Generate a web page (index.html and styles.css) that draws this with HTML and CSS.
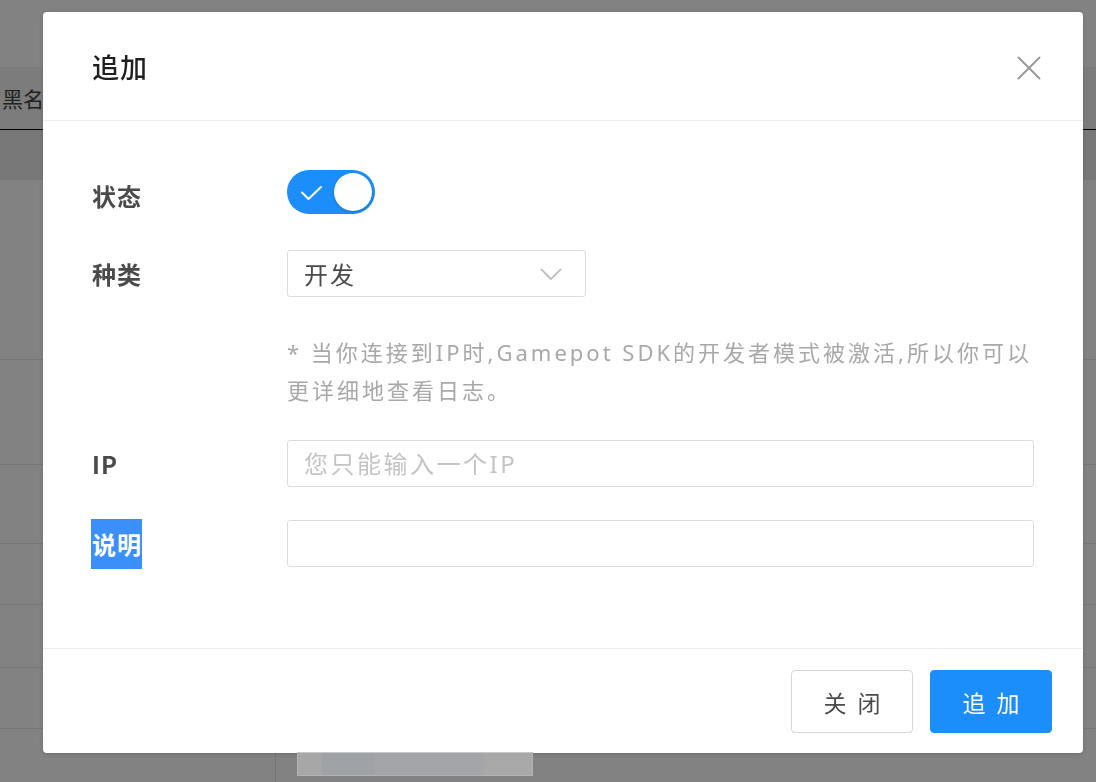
FILE: index.html
```html
<!DOCTYPE html>
<html lang="zh-CN">
<head>
<meta charset="utf-8">
<title>追加</title>
<link rel="stylesheet" href="styles.css">
</head>
<body>
<div class="page">
  <div class="tabs">
    <span class="tab">黑名单</span>
  </div>
  <div class="table">
    <div class="thead"></div>
    <div class="trow r1"></div>
    <div class="trow r2"></div>
    <div class="trow r3"></div>
    <div class="trow r4"></div>
    <div class="trow r5"></div>
    <div class="trow r6"></div>
    <div class="trow r7"></div>
  </div>
</div>

<div class="mask"></div>

<div class="modal">
  <div class="modal-header">
    <h2 class="modal-title">追加</h2>
    <button class="close" aria-label="关闭">
      <svg width="24" height="24" viewBox="0 0 24 24"><path d="M1.5 1.5 L22.5 22.5 M22.5 1.5 L1.5 22.5" stroke="#9a9a9a" stroke-width="2" fill="none" stroke-linecap="round"/></svg>
    </button>
  </div>
  <div class="modal-body">
    <div class="form-item item-status">
      <label class="form-label">状态</label>
      <div class="form-control">
        <span class="switch">
          <svg class="switch-check" width="24" height="16" viewBox="0 0 24 16"><path d="M2 7.5 L8.5 14 L21 2" stroke="#fff" stroke-width="2" fill="none" stroke-linecap="round" stroke-linejoin="round"/></svg>
          <span class="switch-knob"></span>
        </span>
      </div>
    </div>
    <div class="form-item item-type">
      <label class="form-label">种类</label>
      <div class="form-control">
        <div class="select">
          <span class="select-value">开发</span>
          <svg class="select-arrow" width="22" height="12" viewBox="0 0 22 12"><path d="M1 1 L11 11 L21 1" stroke="#b5b5b5" stroke-width="1.6" fill="none"/></svg>
        </div>
      </div>
    </div>
    <div class="form-item item-hint">
      <div class="form-label"></div>
      <p class="hint">* 当你连接到IP时,Gamepot SDK的开发者模式被激活,所以你可以更详细地查看日志。</p>
    </div>
    <div class="form-item item-ip">
      <label class="form-label">IP</label>
      <div class="form-control">
        <input class="input" type="text" placeholder="您只能输入一个IP">
      </div>
    </div>
    <div class="form-item item-desc">
      <label class="form-label"><span class="selected">说明</span></label>
      <div class="form-control">
        <input class="input" type="text">
      </div>
    </div>
  </div>
  <div class="modal-footer">
    <button class="btn btn-default">关 闭</button>
    <button class="btn btn-primary">追 加</button>
  </div>
</div>

<div class="hscroll">
  <span class="seg s1"></span><span class="seg s2"></span><span class="seg s3"></span><span class="seg s4"></span>
</div>
</body>
</html>
```

FILE: styles.css
```css
* { box-sizing: border-box; }

html, body {
  margin: 0;
  padding: 0;
  width: 1096px;
  height: 782px;
  overflow: hidden;
  background: #ffffff;
  font-family: "Noto Sans", "Noto Sans CJK SC", sans-serif;
}

/* ---------- background page ---------- */
.page {
  width: 1096px;
  height: 782px;
  display: flex;
  flex-direction: column;
}

.tabs {
  height: 130px;
  padding-top: 67px;
  display: flex;
  flex-direction: column;
}

.tab {
  flex: 1;
  background: #f3f3f3;
  border-bottom: 2px solid #000;
  font-size: 21px;
  line-height: 62px;
  color: #444;
  padding-left: 2px;
  font-family: "Noto Sans CJK SC", sans-serif;
}

.table {
  display: flex;
  flex-direction: column;
}

.thead {
  height: 50px;
  background: #ebebeb;
}

.trow {
  border-bottom: 1px solid #e6e6e6;
  background:
    linear-gradient(#e6e6e6, #e6e6e6) 275px 0 / 1px 100% no-repeat,
    #ffffff;
}

.r1 { height: 180px; }
.r2 { height: 105px; }
.r3 { height: 79px; }
.r4 { height: 61px; }
.r5 { height: 63px; }
.r6 { height: 61px; }
.r7 { height: 60px; }

.mask {
  position: fixed;
  inset: 0;
  background: rgba(0, 0, 0, 0.49);
}

/* ---------- modal ---------- */
.modal {
  position: absolute;
  left: 43px;
  top: 12px;
  width: 1040px;
  height: 741px;
  background: #fff;
  border-radius: 4px;
  display: flex;
  flex-direction: column;
  box-shadow: 0 1px 4px rgba(0, 0, 0, 0.15);
}

.modal-header {
  height: 109px;
  border-bottom: 1px solid #ececec;
  display: flex;
  align-items: center;
  justify-content: space-between;
  padding: 0 42px 0 49px;
}

.modal-title {
  margin: 0;
  font-family: "Noto Sans CJK SC", sans-serif;
  font-size: 27px;
  font-weight: 500;
  color: #1f1f1f;
  letter-spacing: 1px;
}

.close {
  border: 0;
  background: none;
  padding: 0;
  width: 24px;
  height: 24px;
  margin-top: 3px;
  display: flex;
}

.modal-body {
  flex: 1;
  padding: 49px 48px 0 49px;
  display: flex;
  flex-direction: column;
}

.form-item {
  display: flex;
  align-items: center;
}

.form-label {
  width: 195px;
  flex: none;
  font-family: "Noto Sans CJK SC", sans-serif;
  font-size: 24px;
  font-weight: 700;
  color: #4a4a4a;
  letter-spacing: 1px;
}

.form-control {
  flex: 1;
  display: flex;
}

.item-status { height: 44px; }
.item-status .form-label { padding-top: 6px; }
.item-type { margin-top: 36px; height: 47px; }
.item-hint { margin-top: 36px; align-items: flex-start; }
.item-ip { margin-top: 31px; height: 47px; }
.item-desc { margin-top: 33px; height: 47px; }

/* switch */
.switch {
  position: relative;
  width: 88px;
  height: 44px;
  border-radius: 22px;
  background: #1b8efb;
  display: flex;
  align-items: center;
  justify-content: space-between;
  padding: 0 3px 0 13px;
}

.switch-check { display: block; margin-top: 2px; }

.switch-knob {
  width: 38px;
  height: 38px;
  border-radius: 50%;
  background: #fff;
  box-shadow: 0 1px 3px rgba(0, 0, 0, 0.2);
}

/* select */
.select {
  width: 299px;
  height: 47px;
  border: 1px solid #dcdcdc;
  border-radius: 3px;
  display: flex;
  align-items: center;
  justify-content: space-between;
  padding: 0 23px 0 16px;
}

.select-value {
  font-family: "Noto Sans CJK SC", sans-serif;
  font-size: 24px;
  letter-spacing: 2px;
  color: #4a4a4a;
}

.select-arrow { display: block; margin-top: 1px; }

/* hint */
.hint {
  margin: 0;
  width: 747px;
  font-family: "Noto Sans", "Noto Sans CJK SC", sans-serif;
  font-size: 22px;
  line-height: 38px;
  color: #a8a8a8;
  letter-spacing: 3px;
}

/* inputs */
.input {
  width: 747px;
  height: 47px;
  border: 1px solid #dcdcdc;
  border-radius: 3px;
  padding: 0 16px;
  font-family: "Noto Sans", "Noto Sans CJK SC", sans-serif;
  font-size: 24px;
  letter-spacing: 2.5px;
  color: #4a4a4a;
  outline: none;
}

.input::placeholder { color: #c4c4c4; }

.selected {
  display: inline-block;
  background: #3a8ff8;
  color: #fff;
  line-height: 50px;
  margin-left: -1px;
  padding: 0 0 0 1px;
}

/* footer */
.modal-footer {
  height: 105px;
  border-top: 1px solid #ececec;
  display: flex;
  justify-content: flex-end;
  align-items: flex-start;
  gap: 17px;
  padding: 21px 31px 0 0;
}

.btn {
  width: 122px;
  height: 63px;
  border-radius: 4px;
  font-family: "Noto Sans CJK SC", sans-serif;
  font-size: 23px;
  letter-spacing: 3px;
  padding: 0 0 0 3px;
}

.btn-default {
  background: #fff;
  border: 1.5px solid #d6d6d6;
  color: #4a4a4a;
}

.btn-primary {
  background: #1b8efb;
  border: 1px solid #1b8efb;
  color: #fff;
}

/* horizontal scrollbar */
.hscroll {
  position: absolute;
  left: 297px;
  top: 752px;
  width: 236px;
  height: 24px;
  display: flex;
  border: 1px solid #b3b3b3;
  border-top-color: #c8c8c8;
}

.seg { height: 100%; }
.s1 { width: 24px; background: #a7a7a7; }
.s2 { width: 53px; background: #9fa3a8; }
.s3 { width: 109px; background: #a3a5a8; }
.s4 { flex: 1; background: #a8a8a8; }
```
